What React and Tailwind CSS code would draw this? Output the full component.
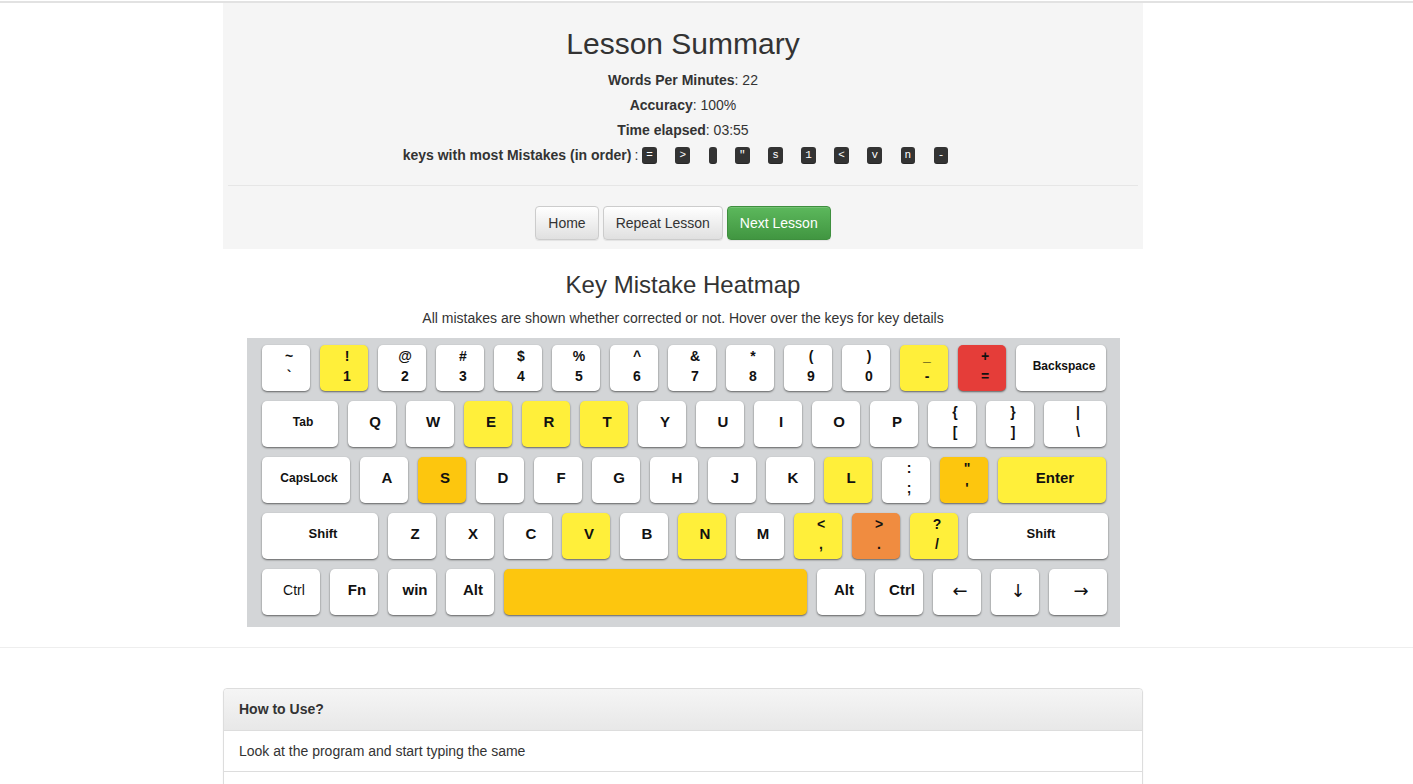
import React from 'react';

const Y = 'bg-[#ffef3a]';
const A = 'bg-[#fdc60e]';
const O = 'bg-[#f08c40]';
const R = 'bg-[#e53d39]';
const W = 'bg-white';

const arrow = "text-[18px] font-normal font-['DejaVu_Sans',sans-serif]";

const rows = [
  [
    { t: '~', b: '`' }, { t: '!', b: '1', c: Y }, { t: '@', b: '2' }, { t: '#', b: '3' },
    { t: '$', b: '4' }, { t: '%', b: '5' }, { t: '^', b: '6' }, { t: '&', b: '7' },
    { t: '*', b: '8' }, { t: '(', b: '9' }, { t: ')', b: '0' }, { t: '_', b: '-', c: Y },
    { t: '+', b: '=', c: R }, { l: 'Backspace', w: 'w-[90px]', s: 'text-[12px]' },
  ],
  [
    { l: 'Tab', w: 'w-[76px]', s: 'text-[12px]' }, { l: 'Q' }, { l: 'W' }, { l: 'E', c: Y },
    { l: 'R', c: Y }, { l: 'T', c: Y }, { l: 'Y' }, { l: 'U' }, { l: 'I' }, { l: 'O' }, { l: 'P' },
    { t: '{', b: '[' }, { t: '}', b: ']' }, { t: '|', b: '\\', w: 'w-[62px]' },
  ],
  [
    { l: 'CapsLock', w: 'w-[88px]', s: 'text-[12px]' }, { l: 'A' }, { l: 'S', c: A }, { l: 'D' },
    { l: 'F' }, { l: 'G' }, { l: 'H' }, { l: 'J' }, { l: 'K' }, { l: 'L', c: Y },
    { t: ':', b: ';' }, { t: '"', b: "'", c: A }, { l: 'Enter', w: 'w-[108px]', c: Y },
  ],
  [
    { l: 'Shift', w: 'w-[116px]', s: 'text-[13px]' }, { l: 'Z' }, { l: 'X' }, { l: 'C' },
    { l: 'V', c: Y }, { l: 'B' }, { l: 'N', c: Y }, { l: 'M' }, { t: '<', b: ',', c: Y },
    { t: '>', b: '.', c: O }, { t: '?', b: '/', c: Y }, { l: 'Shift', w: 'w-[140px]', s: 'text-[13px]' },
  ],
  [
    { l: 'Ctrl', w: 'w-[58px]', s: 'text-[14px] font-normal' }, { l: 'Fn' }, { l: 'win' }, { l: 'Alt' },
    { l: '', w: 'w-[303px]', c: A }, { l: 'Alt' }, { l: 'Ctrl' },
    { l: '←', s: arrow }, { l: '↓', s: arrow }, { l: '→', w: 'w-[58px]', s: arrow },
  ],
];

const mistakes = ['=', '>', '', '"', 's', '1', '<', 'v', 'n', '-'];

function Key({ k }) {
  const base = `${k.w || 'w-[48px]'} ${k.c || W} h-[46px] shrink-0 rounded-[5px] shadow-[0_1px_2px_rgba(0,0,0,0.55)] text-[#111] font-bold pl-[7px]`;
  if (k.t !== undefined) {
    return (
      <div className={`${base} flex flex-col items-center pt-[1px] text-[14px] leading-[20px]`}>
        <span>{k.t}</span>
        <span>{k.b}</span>
      </div>
    );
  }
  return (
    <div className={`${base} flex items-center justify-center pb-[4px] ${k.s || 'text-[15px]'}`}>
      {k.l}
    </div>
  );
}

function Btn({ children, green }) {
  const cls = green
    ? 'bg-gradient-to-b from-[#5cb85c] to-[#419641] border-[#3e8f3e] text-white'
    : 'bg-gradient-to-b from-white to-[#e0e0e0] border-[#ccc] text-[#333]';
  return (
    <button
      className={`${cls} h-[34px] px-[12px] border rounded-[4px] text-[14px] shadow-[inset_0_1px_0_rgba(255,255,255,0.15),0_1px_1px_rgba(0,0,0,0.075)]`}
    >
      {children}
    </button>
  );
}

export default function App() {
  return (
    <div className="min-h-[784px] bg-white text-[#333] font-['Liberation_Sans',Arial,sans-serif] text-[14px]">
      <div className="mt-px border-t-2 border-[#e2e2e2]" />
      <div className="w-[1366px]">
        <div className="mx-auto w-[920px] bg-[#f5f5f5] pt-[24px] pb-[9px] text-center">
          <h1 className="text-[30px] leading-[33px]">Lesson Summary</h1>
          <div className="mt-[8px]">
            <p className="leading-[25px]"><b>Words Per Minutes</b>: 22</p>
            <p className="leading-[25px]"><b>Accuracy</b>: 100%</p>
            <p className="leading-[25px]"><b>Time elapsed</b>: 03:55</p>
            <p className="leading-[25px] flex items-center justify-center pr-[15px]">
              <b>keys with most Mistakes (in order)</b>
              <span className="ml-[3px]">:</span>
              {mistakes.map((m, i) => (
                <kbd
                  key={i}
                  className={`${i === 0 ? 'ml-[4px]' : 'ml-[18.5px]'} inline-block h-[17px] min-w-[8px] px-[4px] rounded-[3px] bg-[#333] text-white text-[11px] leading-[17px] font-['Liberation_Mono',monospace] shadow-[inset_0_-1px_0_rgba(0,0,0,0.25)]`}
                >
                  {m}
                </kbd>
              ))}
            </p>
          </div>
          <div className="mx-[5px] mt-[17px] border-t border-[#e6e6e6]" />
          <div className="mt-[20px] flex justify-center gap-[4px]">
            <Btn>Home</Btn>
            <Btn>Repeat Lesson</Btn>
            <Btn green>Next Lesson</Btn>
          </div>
        </div>

        <div className="mt-[23px] text-center">
          <h3 className="text-[24px] leading-[26px]">Key Mistake Heatmap</h3>
          <p className="mt-[10px] leading-[20px]">
            All mistakes are shown whether corrected or not. Hover over the keys for key details
          </p>
        </div>

        <div className="mx-auto mt-[10px] w-[873px] bg-[#d3d5d7] pt-[7px] pb-[12px] pl-[15px] flex flex-col gap-[10px]">
          {rows.map((row, ri) => (
            <div key={ri} className="flex gap-[10px]">
              {row.map((k, ki) => (
                <Key key={ki} k={k} />
              ))}
            </div>
          ))}
        </div>
      </div>

      <div className="mt-[20px] border-t border-[#eee]" />

      <div className="w-[1366px]">
        <div className="mx-auto mt-[40px] w-[920px] border border-[#ddd] rounded-t-[4px] shadow-[0_1px_2px_rgba(0,0,0,0.05)]">
          <div className="h-[42px] px-[15px] flex items-center font-bold bg-gradient-to-b from-[#f5f5f5] to-[#e8e8e8] border-b border-[#ddd] rounded-t-[4px]">
            How to Use?
          </div>
          <div className="h-[41px] px-[15px] flex items-center border-b border-[#ddd]">
            Look at the program and start typing the same
          </div>
          <div className="h-[41px]" />
        </div>
      </div>
    </div>
  );
}
